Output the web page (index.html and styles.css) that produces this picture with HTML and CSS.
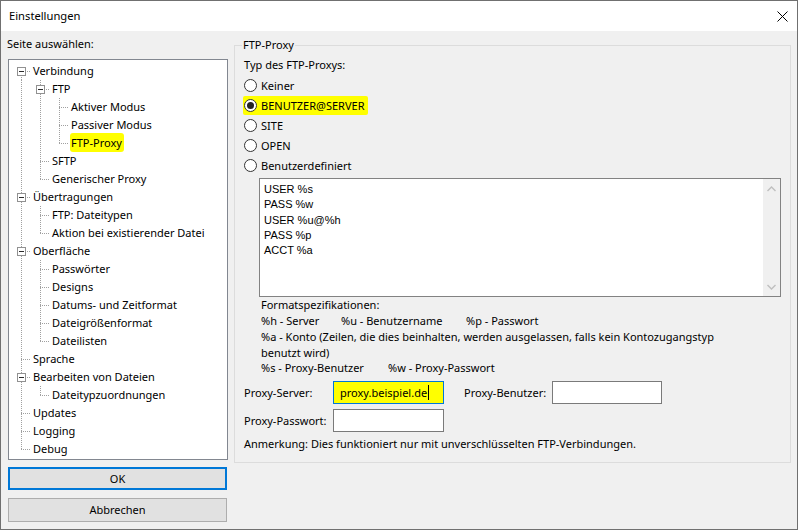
FILE: index.html
```html
<!DOCTYPE html>
<html lang="de">
<head>
<meta charset="utf-8">
<title>Einstellungen</title>
<link rel="stylesheet" href="styles.css">
</head>
<body>
<div class="window">
  <div class="titlebar">
    <span class="title">Einstellungen</span>
    <svg class="close" width="11" height="11" viewBox="0 0 11 11"><path d="M0.5 0.5L10.5 10.5M10.5 0.5L0.5 10.5" stroke="#000" stroke-width="1" fill="none"/></svg>
  </div>
  <div class="content">
    <div class="left">
      <div class="pick">Seite auswählen:</div>
      <div class="tree">
        <div class="row"><span class="c c-first"><span class="exp"></span></span><span class="t">Verbindung</span></div>
        <div class="row"><span class="c c-vert"></span><span class="c c-tee"><span class="exp"></span></span><span class="t">FTP</span></div>
        <div class="row"><span class="c c-vert"></span><span class="c c-vert"></span><span class="c c-tee"></span><span class="t">Aktiver Modus</span></div>
        <div class="row"><span class="c c-vert"></span><span class="c c-vert"></span><span class="c c-tee"></span><span class="t">Passiver Modus</span></div>
        <div class="row"><span class="c c-vert"></span><span class="c c-vert"></span><span class="c c-elbow"></span><span class="t t-hl">FTP-Proxy</span></div>
        <div class="row"><span class="c c-vert"></span><span class="c c-tee"></span><span class="t">SFTP</span></div>
        <div class="row"><span class="c c-vert"></span><span class="c c-elbow"></span><span class="t">Generischer Proxy</span></div>
        <div class="row"><span class="c c-tee"><span class="exp"></span></span><span class="t">Übertragungen</span></div>
        <div class="row"><span class="c c-vert"></span><span class="c c-tee"></span><span class="t">FTP: Dateitypen</span></div>
        <div class="row"><span class="c c-vert"></span><span class="c c-elbow"></span><span class="t">Aktion bei existierender Datei</span></div>
        <div class="row"><span class="c c-tee"><span class="exp"></span></span><span class="t">Oberfläche</span></div>
        <div class="row"><span class="c c-vert"></span><span class="c c-tee"></span><span class="t">Passwörter</span></div>
        <div class="row"><span class="c c-vert"></span><span class="c c-tee"></span><span class="t">Designs</span></div>
        <div class="row"><span class="c c-vert"></span><span class="c c-tee"></span><span class="t">Datums- und Zeitformat</span></div>
        <div class="row"><span class="c c-vert"></span><span class="c c-tee"></span><span class="t">Dateigrößenformat</span></div>
        <div class="row"><span class="c c-vert"></span><span class="c c-elbow"></span><span class="t">Dateilisten</span></div>
        <div class="row"><span class="c c-tee"></span><span class="t">Sprache</span></div>
        <div class="row"><span class="c c-tee"><span class="exp"></span></span><span class="t">Bearbeiten von Dateien</span></div>
        <div class="row"><span class="c c-vert"></span><span class="c c-elbow"></span><span class="t">Dateitypzuordnungen</span></div>
        <div class="row"><span class="c c-tee"></span><span class="t">Updates</span></div>
        <div class="row"><span class="c c-tee"></span><span class="t">Logging</span></div>
        <div class="row"><span class="c c-elbow"></span><span class="t">Debug</span></div>
      </div>
      <div class="btn btn-ok">OK</div>
      <div class="btn btn-cancel">Abbrechen</div>
    </div>
    <fieldset class="group">
      <legend class="legend">FTP-Proxy</legend>
      <div class="typ">Typ des FTP-Proxys:</div>
      <div class="radios">
        <div class="radio"><span class="rb"></span><span>Keiner</span></div>
        <div class="radio"><span class="hl"><span class="rb rb-on"></span><span>BENUTZER@SERVER</span></span></div>
        <div class="radio"><span class="rb"></span><span>SITE</span></div>
        <div class="radio"><span class="rb"></span><span>OPEN</span></div>
        <div class="radio"><span class="rb"></span><span>Benutzerdefiniert</span></div>
      </div>
      <div class="ta">
        <div class="ta-text">USER %s
PASS %w
USER %u@%h
PASS %p
ACCT %a</div>
        <div class="ta-scroll">
          <svg width="9" height="6" viewBox="0 0 9 6"><path d="M0.5 5L4.5 1L8.5 5" stroke="#bfbfbf" stroke-width="1.4" fill="none"/></svg>
          <svg width="9" height="6" viewBox="0 0 9 6"><path d="M0.5 1L4.5 5L8.5 1" stroke="#bfbfbf" stroke-width="1.4" fill="none"/></svg>
        </div>
      </div>
      <div class="fmt">
        <div class="fl">Formatspezifikationen:</div>
        <div class="fl"><span class="col c1">%h - Server</span><span class="col c2">%u - Benutzername</span><span>%p - Passwort</span></div>
        <div class="fp">%a - Konto (Zeilen, die dies beinhalten, werden ausgelassen, falls kein Kontozugangstyp<br>benutzt wird)</div>
        <div class="fl"><span class="col c3">%s - Proxy-Benutzer</span><span>%w - Proxy-Passwort</span></div>
      </div>
      <div class="prow">
        <span class="plabel">Proxy-Server:</span>
        <div class="inp inp-focus"><span class="inp-hl">proxy.beispiel.de</span><span class="caret"></span></div>
        <span class="plabel plabel2">Proxy-Benutzer:</span>
        <div class="inp inp-narrow"></div>
      </div>
      <div class="prow">
        <span class="plabel">Proxy-Passwort:</span>
        <div class="inp"></div>
      </div>
      <div class="note">Anmerkung: Dies funktioniert nur mit unverschlüsselten FTP-Verbindungen.</div>
    </fieldset>
  </div>
</div>
</body>
</html>
```
FILE: styles.css
```css
body {
  margin: 0;
  font-family: "Noto Sans", "Liberation Sans", sans-serif;
  font-size: 11px;
  color: #000;
}

.window {
  width: 798px;
  height: 530px;
  box-sizing: border-box;
  border: 1px solid #707070;
  background: #f0f0f0;
  display: flex;
  flex-direction: column;
  overflow: hidden;
}

.titlebar {
  height: 30px;
  flex-shrink: 0;
  background: #fff;
  display: flex;
  align-items: center;
  justify-content: space-between;
  padding: 0 9px 0 8px;
}

.title {
  font-size: 11.2px;
  line-height: 16px;
}

.close {
  display: block;
}

.content {
  display: flex;
  align-items: flex-start;
  gap: 6px;
  padding: 5px 0 0 7px;
}

.left {
  width: 220px;
  display: flex;
  flex-direction: column;
}

.pick {
  line-height: 16px;
  margin-left: -1px;
}

.tree {
  height: 401px;
  box-sizing: border-box;
  margin-top: 7px;
  border: 1px solid #828790;
  background: #fff;
  padding: 2px 0 0 3px;
}

.row {
  display: flex;
  align-items: center;
  height: 18px;
  line-height: 17px;
  white-space: nowrap;
}

.c {
  width: 19px;
  height: 18px;
  flex-shrink: 0;
  display: flex;
  align-items: center;
  background-repeat: no-repeat;
}

.c-vert {
  background-image: repeating-linear-gradient(to bottom, #a0a0a0 0 1px, transparent 1px 2px);
  background-position: 9px 0;
  background-size: 1px 18px;
}

.c-tee {
  background-image:
    repeating-linear-gradient(to bottom, #a0a0a0 0 1px, transparent 1px 2px),
    repeating-linear-gradient(to right, #a0a0a0 0 1px, transparent 1px 2px);
  background-position: 9px 0, 9px 9px;
  background-size: 1px 18px, 10px 1px;
}

.c-elbow {
  background-image:
    repeating-linear-gradient(to bottom, #a0a0a0 0 1px, transparent 1px 2px),
    repeating-linear-gradient(to right, #a0a0a0 0 1px, transparent 1px 2px);
  background-position: 9px 0, 9px 9px;
  background-size: 1px 9px, 10px 1px;
}

.c-first {
  background-image:
    repeating-linear-gradient(to bottom, #a0a0a0 0 1px, transparent 1px 2px),
    repeating-linear-gradient(to right, #a0a0a0 0 1px, transparent 1px 2px);
  background-position: 9px 9px, 9px 9px;
  background-size: 1px 9px, 10px 1px;
}

.exp {
  width: 9px;
  height: 9px;
  box-sizing: border-box;
  margin-left: 5px;
  border: 1px solid #919191;
  background: linear-gradient(#2b2b2b, #2b2b2b) center / 5px 1px no-repeat, #fff;
}

.t {
  margin-left: 2px;
  margin-bottom: 1px;
}

.t-hl {
  background: #ffff00;
  margin-left: 1px;
  padding: 1px 2px 1px 1px;
  border-radius: 3px;
}

.btn {
  box-sizing: border-box;
  width: 219px;
  background: #e1e1e1;
  text-align: center;
}

.btn-ok {
  height: 23px;
  margin-top: 7px;
  border: 2px solid #0078d7;
  line-height: 19px;
}

.btn-cancel {
  height: 24px;
  margin-top: 8px;
  border: 1px solid #adadad;
  line-height: 22px;
}

.group {
  margin: 1px 0 0 0;
  width: 557px;
  height: 426px;
  box-sizing: border-box;
  border: 1px solid #dcdcdc;
  padding: 4px 9px 0 9px;
  min-width: 0;
}

.legend {
  padding: 0 1px;
  margin-left: -2px;
  line-height: 16px;
}

.typ {
  line-height: 16px;
}

.radios {
  margin-top: 2px;
}

.radio {
  height: 20px;
  display: flex;
  align-items: center;
}

.hl {
  display: inline-flex;
  align-items: center;
  height: 19px;
  background: #ffff00;
  margin-left: -1px;
  padding: 0 4px 0 1px;
  border-radius: 2px;
}

.rb {
  width: 13px;
  height: 13px;
  box-sizing: border-box;
  border: 1px solid #333;
  border-radius: 50%;
  background: #fff;
  margin-right: 4px;
  display: flex;
  align-items: center;
  justify-content: center;
}

.rb-on::after {
  content: "";
  width: 7px;
  height: 7px;
  border-radius: 50%;
  background: #222;
}

.ta {
  margin: 3px 0 0 15px;
  width: 522px;
  height: 119px;
  box-sizing: border-box;
  border: 1px solid #828282;
  background: #fff;
  display: flex;
}

.ta-text {
  flex: 1;
  padding: 3px 4px 0;
  font-family: "Liberation Sans", Arial, sans-serif;
  font-size: 11px;
  line-height: 15.3px;
  white-space: pre;
}

.ta-scroll {
  width: 17px;
  background: #f0f0f0;
  display: flex;
  flex-direction: column;
  justify-content: space-between;
  align-items: center;
  padding: 7px 0 6px;
}

.ta-scroll svg {
  display: block;
}

.fmt {
  margin-left: 17px;
  white-space: nowrap;
}

.fl {
  line-height: 16px;
}

.fp {
  line-height: 15.5px;
}

.col {
  display: inline-block;
}

.c1 { width: 80px; }
.c2 { width: 125px; }
.c3 { width: 127px; }

.prow {
  display: flex;
  align-items: center;
  margin-top: 5px;
}

.plabel {
  width: 89px;
  flex-shrink: 0;
}

.plabel2 {
  width: 88px;
  margin-left: 20px;
}

.inp {
  width: 111px;
  height: 23px;
  box-sizing: border-box;
  border: 1px solid #7a7a7a;
  background: #fff;
  display: flex;
  align-items: center;
}

.inp-narrow {
  width: 110px;
}

.inp-focus {
  border-color: #0078d7;
  background: #ffff00;
  padding-left: 6px;
}

.caret {
  width: 1px;
  height: 15px;
  background: #000;
  margin-left: 1px;
}

.note {
  margin-top: 4px;
  line-height: 16px;
}
```
